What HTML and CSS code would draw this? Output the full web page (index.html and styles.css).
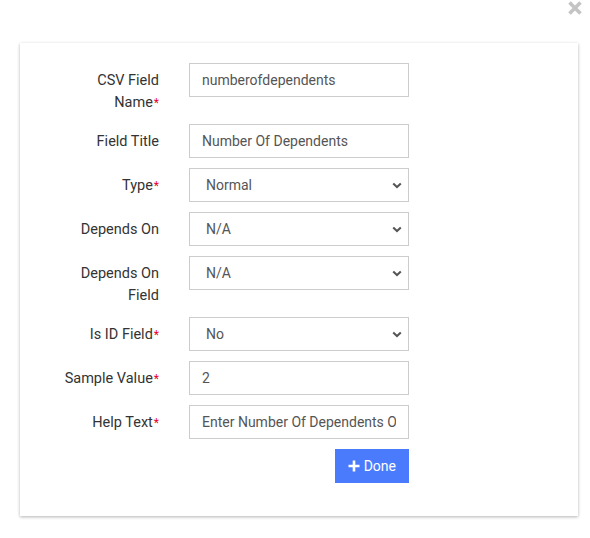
FILE: index.html
```html
<!DOCTYPE html>
<html lang="en">
<head>
  <meta charset="UTF-8">
  <meta name="viewport" content="width=device-width, initial-scale=1.0">
  <title>Edit Field</title>
  <link rel="stylesheet" href="styles.css">
</head>
<body>
  <button class="close-btn" type="button" aria-label="Close">
    <svg width="14" height="14" viewBox="0 0 14 14"><path d="M1.5 1.5 L12.5 12.5 M12.5 1.5 L1.5 12.5" stroke="#c4c4c4" stroke-width="3.6" stroke-linecap="butt"/></svg>
  </button>
  <div class="card">
    <form class="field-form">
      <label class="form-label" for="csv-name">CSV Field Name<span class="req">*</span></label>
      <input class="form-control" id="csv-name" type="text" value="numberofdependents">

      <label class="form-label" for="title">Field Title</label>
      <input class="form-control" id="title" type="text" value="Number Of Dependents">

      <label class="form-label" for="type">Type<span class="req">*</span></label>
      <select class="form-control" id="type"><option>Normal</option></select>

      <label class="form-label" for="depends">Depends On</label>
      <select class="form-control" id="depends"><option>N/A</option></select>

      <label class="form-label" for="depends-field">Depends On Field</label>
      <select class="form-control" id="depends-field"><option>N/A</option></select>

      <label class="form-label" for="is-id">Is ID Field<span class="req">*</span></label>
      <select class="form-control" id="is-id"><option>No</option></select>

      <label class="form-label" for="sample">Sample Value<span class="req">*</span></label>
      <input class="form-control" id="sample" type="text" value="2">

      <label class="form-label" for="help">Help Text<span class="req">*</span></label>
      <input class="form-control" id="help" type="text" value="Enter Number Of Dependents Of Employee">

      <div class="actions">
        <button class="btn-done" type="button">
          <svg width="12" height="12" viewBox="0 0 12 12"><path d="M6 0.5 V11.5 M0.5 6 H11.5" stroke="#fff" stroke-width="2.6"/></svg>
          Done
        </button>
      </div>
    </form>
  </div>
</body>
</html>
```

FILE: styles.css
```css
* { box-sizing: border-box; }
body {
  margin: 0;
  padding-bottom: 20px;
  background: #fff;
  font-family: Roboto, "Noto Sans", Arial, sans-serif;
  font-size: 14px;
  color: #333;
}
.close-btn {
  position: absolute;
  top: 1px;
  left: 568px;
  padding: 0;
  border: 0;
  background: none;
  line-height: 0;
  cursor: pointer;
}
.card {
  margin: 43px 12px 0 20px;
  width: 558px;
  background: #fff;
  box-shadow: 0 1px 3px rgba(0, 0, 0, .3);
  padding: 20px 0 33px 39px;
}
.field-form {
  display: grid;
  grid-template-columns: 100px 220px;
  column-gap: 30px;
  row-gap: 10px;
  align-items: start;
}
.form-label {
  text-align: right;
  font-size: 14.5px;
  line-height: 22px;
  padding-top: 7px;
  color: #333;
}
.req {
  color: #e8002a;
  font-size: 12px;
  margin-left: 1px;
}
.form-control {
  width: 220px;
  height: 34px;
  border: 1px solid #ccc;
  border-radius: 0;
  padding: 0 12px;
  font-family: inherit;
  font-size: 14px;
  color: #555;
  background: #fff;
  outline: none;
}
select.form-control {
  appearance: none;
  padding-left: 16px;
  background-image: url("data:image/svg+xml;utf8,<svg xmlns='http://www.w3.org/2000/svg' width='10' height='7' viewBox='0 0 10 7'><path d='M1.2 1.4 L5 5 L8.8 1.4' fill='none' stroke='%23555' stroke-width='2'/></svg>");
  background-repeat: no-repeat;
  background-position: right 6px center;
}
.actions {
  grid-column: 2;
  display: flex;
  justify-content: flex-end;
}
.btn-done {
  display: flex;
  align-items: center;
  gap: 4px;
  height: 34px;
  padding: 0 13px;
  border: 0;
  border-radius: 0;
  background: #4a7bfc;
  color: #fff;
  font-family: inherit;
  font-size: 14px;
  cursor: pointer;
}
```
